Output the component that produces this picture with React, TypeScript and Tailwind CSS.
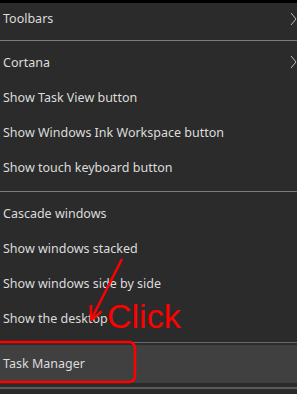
const groups = [
  ["Toolbars"],
  ["Cortana", "Show Task View button", "Show Windows Ink Workspace button", "Show touch keyboard button"],
  ["Cascade windows", "Show windows stacked", "Show windows side by side", "Show the desktop"],
];

const submenu = new Set(["Toolbars", "Cortana"]);

function Item({ label, first }: { label: string; first?: boolean }) {
  return (
    <div
      className={`relative flex items-center pl-[3px] text-[12.5px] text-[#dcdcdc] ${
        first ? "h-[32px]" : "h-[35px]"
      }`}
    >
      {label}
      {submenu.has(label) && (
        <svg className="absolute right-0 top-[9px]" width="7" height="14" viewBox="0 0 7 14">
          <path d="M1 1 L6 7 L1 13" fill="none" stroke="#bdbdbd" strokeWidth="1" />
        </svg>
      )}
    </div>
  );
}

function Separator() {
  return (
    <div className="py-[5px]">
      <div className="h-px bg-[#7c7c7c]" />
    </div>
  );
}

export default function App() {
  return (
    <div
      className="relative h-[394px] w-[297px] overflow-hidden bg-[#2b2b2b]"
      style={{ fontFamily: '"Noto Sans", "Open Sans", sans-serif' }}
    >
      <div className="h-[3px] bg-black" />
      {groups.map((group, i) => (
        <div key={i}>
          {i > 0 && <Separator />}
          {group.map((label, j) => (
            <Item key={label} label={label} first={i === 0 && j === 0} />
          ))}
        </div>
      ))}
      <div className="pt-[5px]">
        <div className="h-px bg-[#6a6a6a]" />
      </div>
      <div className="mt-[2px] flex h-[38px] items-center bg-[#404040] pl-[3px] text-[12.5px] text-[#dcdcdc]">
        Task Manager
      </div>
      <div className="mt-[4px] h-[2px] bg-[#5a5a5a]" />

      {/* annotation */}
      <svg className="absolute left-0 top-0" width="297" height="394" viewBox="0 0 297 394">
        <rect x="-8" y="342" width="143" height="40" rx="6" fill="none" stroke="#ff0000" strokeWidth="2.5" />
        <path d="M122 259 L92 318" stroke="#ff0000" strokeWidth="2.5" fill="none" />
        <path d="M91 320 L91 306 M91 320 L101 312" stroke="#ff0000" strokeWidth="2.5" fill="none" strokeLinecap="round" />
      </svg>
      <span
        className="absolute left-[107px] top-[299px] text-[34px] leading-none text-[#ff0000]"
        style={{ fontFamily: '"Liberation Sans", Arial, sans-serif' }}
      >
        Click
      </span>
    </div>
  );
}
